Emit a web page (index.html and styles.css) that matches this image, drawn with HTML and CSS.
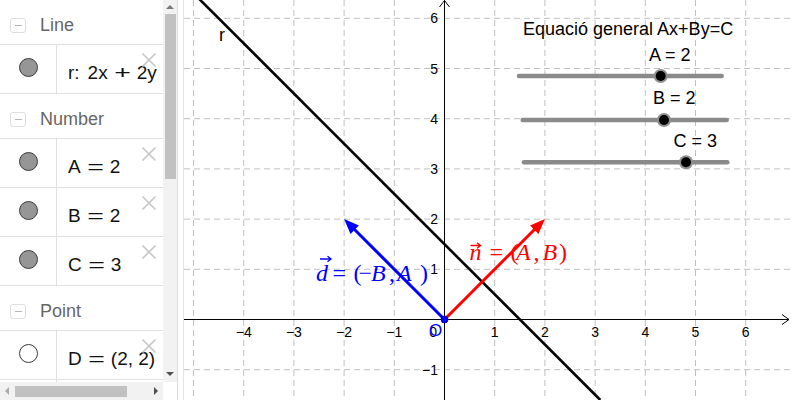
FILE: index.html
```html
<!DOCTYPE html>
<html>
<head>
<meta charset="utf-8">
<link rel="stylesheet" href="styles.css">
</head>
<body>
<div class="app">
  <div class="algebra">
    <div class="av-list">
      <div class="group"><span class="toggle"></span><span class="gname">Line</span></div>
      <div class="item">
        <div class="marble"><span class="dot"></span></div>
        <div class="expr"><span class="lbl">r:</span>2x<span class="op">+</span>2y<span class="op">=</span>3</div>
        <svg class="del" viewBox="0 0 16 16"><path d="M1.5 1.5L14.5 14.5M14.5 1.5L1.5 14.5"/></svg>
      </div>
      <div class="group"><span class="toggle"></span><span class="gname">Number</span></div>
      <div class="item">
        <div class="marble"><span class="dot"></span></div>
        <div class="expr">A<span class="op">=</span>2</div>
        <svg class="del" viewBox="0 0 16 16"><path d="M1.5 1.5L14.5 14.5M14.5 1.5L1.5 14.5"/></svg>
      </div>
      <div class="item">
        <div class="marble"><span class="dot"></span></div>
        <div class="expr">B<span class="op">=</span>2</div>
        <svg class="del" viewBox="0 0 16 16"><path d="M1.5 1.5L14.5 14.5M14.5 1.5L1.5 14.5"/></svg>
      </div>
      <div class="item">
        <div class="marble"><span class="dot"></span></div>
        <div class="expr">C<span class="op">=</span>3</div>
        <svg class="del" viewBox="0 0 16 16"><path d="M1.5 1.5L14.5 14.5M14.5 1.5L1.5 14.5"/></svg>
      </div>
      <div class="group"><span class="toggle"></span><span class="gname">Point</span></div>
      <div class="item">
        <div class="marble"><span class="dot hollow"></span></div>
        <div class="expr">D<span class="op">=</span>(2, 2)</div>
        <svg class="del" viewBox="0 0 16 16"><path d="M1.5 1.5L14.5 14.5M14.5 1.5L1.5 14.5"/></svg>
      </div>
      <div class="item">
        <div class="marble"></div>
      </div>
    </div>
    <div class="vscroll">
      <div class="btn top"><span class="tri up"></span></div>
      <div class="vthumb"></div>
      <div class="spacer"></div>
      <div class="btn bottom"><span class="tri down"></span></div>
    </div>
    <div class="hscroll">
      <div class="hbtn left"><span class="tri lt"></span></div>
      <div class="hthumb"></div>
      <div class="spacer"></div>
      <div class="hbtn right"><span class="tri rt"></span></div>
    </div>
    <div class="corner"></div>
  </div>
  <div class="splitter"></div>
  <div class="graphics">
    <svg width="606" height="400" viewBox="184 0 606 400" xmlns="http://www.w3.org/2000/svg">
      <g class="grid">
        <line x1="193.5" y1="0" x2="193.5" y2="400"/>
        <line x1="243.7" y1="0" x2="243.7" y2="400"/>
        <line x1="293.9" y1="0" x2="293.9" y2="400"/>
        <line x1="344.1" y1="0" x2="344.1" y2="400"/>
        <line x1="394.3" y1="0" x2="394.3" y2="400"/>
        <line x1="494.7" y1="0" x2="494.7" y2="400"/>
        <line x1="544.9" y1="0" x2="544.9" y2="400"/>
        <line x1="595.1" y1="0" x2="595.1" y2="400"/>
        <line x1="645.3" y1="0" x2="645.3" y2="400"/>
        <line x1="695.5" y1="0" x2="695.5" y2="400"/>
        <line x1="745.7" y1="0" x2="745.7" y2="400"/>
        <line x1="184" y1="18.3" x2="790" y2="18.3"/>
        <line x1="184" y1="68.5" x2="790" y2="68.5"/>
        <line x1="184" y1="118.7" x2="790" y2="118.7"/>
        <line x1="184" y1="168.9" x2="790" y2="168.9"/>
        <line x1="184" y1="219.1" x2="790" y2="219.1"/>
        <line x1="184" y1="269.3" x2="790" y2="269.3"/>
        <line x1="184" y1="369.7" x2="790" y2="369.7"/>
      </g>
      <g class="axes">
        <line x1="184" y1="319.5" x2="789" y2="319.5"/>
        <line x1="444.5" y1="0" x2="444.5" y2="400"/>
        <path d="M782 314.5L789 319.5L782 324.5"/>
        <path d="M439.5 7L444.5 0.5L449.5 7"/>
      </g>
      <g class="ticks">
        <text x="243.7" y="337">−4</text>
        <text x="293.9" y="337">−3</text>
        <text x="344.1" y="337">−2</text>
        <text x="394.3" y="337">−1</text>
        <text x="494.7" y="337">1</text>
        <text x="544.9" y="337">2</text>
        <text x="595.1" y="337">3</text>
        <text x="645.3" y="337">4</text>
        <text x="695.5" y="337">5</text>
        <text x="745.7" y="337">6</text>
      </g>
      <g class="yticks">
        <text x="438" y="23.3">6</text>
        <text x="438" y="73.5">5</text>
        <text x="438" y="123.7">4</text>
        <text x="438" y="173.9">3</text>
        <text x="438" y="224.1">2</text>
        <text x="438" y="274.3">1</text>
        <text x="438" y="374.7">−1</text>
        <text x="437" y="337">0</text>
      </g>
      <line class="liner" x1="184" y1="-16.3" x2="600.3" y2="400"/>
      <text class="rlabel" x="219" y="41">r</text>
      <line class="vecb" x1="444.5" y1="319.5" x2="353" y2="228"/>
      <polygon class="headb" points="344.1,219.1 358.9,225.5 350.5,233.9"/>
      <line class="vecr" x1="444.5" y1="319.5" x2="536" y2="228"/>
      <polygon class="headr" points="544.9,219.1 538.5,233.9 530.1,225.5"/>
      <circle class="ptO" cx="444.5" cy="319.5" r="3.5"/>
      <text class="olabel" x="429" y="335.5">O</text>
      <g class="mathr">
        <text y="259.5"><tspan x="469.5" class="it">n</tspan><tspan x="489.5">=</tspan><tspan x="510.5">(</tspan><tspan x="516" class="it">A</tspan><tspan x="533.5">,</tspan><tspan x="542.5" class="it">B</tspan><tspan x="559">)</tspan></text>
        <path class="acc" d="M470.5 245.5H480M477 242.8L480.5 245.5L477 248.2"/>
      </g>
      <g class="mathb">
        <text y="280.5"><tspan x="316" class="it">d</tspan><tspan x="332.5">=</tspan><tspan x="353.5">(</tspan><tspan x="358.5">−</tspan><tspan x="371" class="it">B</tspan><tspan x="389">,</tspan><tspan x="397" class="it">A</tspan><tspan x="420">)</tspan></text>
        <path class="acc" d="M320 259H330.5M327.5 256.3L331 259L327.5 261.7"/>
      </g>
      <g class="sliders">
        <text class="title" x="523" y="35">Equació general Ax+By=C</text>
        <text class="slab" x="649" y="60.7">A = 2</text>
        <line class="track" x1="519" y1="76" x2="721.7" y2="76"/>
        <circle class="ring" cx="660.7" cy="76" r="7"/>
        <circle class="knob" cx="660.7" cy="76" r="5"/>
        <text class="slab" x="653" y="104.3">B = 2</text>
        <line class="track" x1="522.7" y1="120" x2="726.7" y2="120"/>
        <circle class="ring" cx="664" cy="120" r="7"/>
        <circle class="knob" cx="664" cy="120" r="5"/>
        <text class="slab" x="673.5" y="146.7">C = 3</text>
        <line class="track" x1="524" y1="162.3" x2="727.3" y2="162.3"/>
        <circle class="ring" cx="686" cy="162.3" r="7"/>
        <circle class="knob" cx="686" cy="162.3" r="5"/>
      </g>
    </svg>
  </div>
  <div class="edge"></div>
</div>
</body>
</html>
```
FILE: styles.css
```css
html, body {
  margin: 0;
  padding: 0;
  background: #fff;
}
body {
  width: 800px;
  height: 400px;
  overflow: hidden;
  font-family: "Liberation Sans", Arial, sans-serif;
}
.app {
  display: flex;
  width: 800px;
  height: 400px;
}

/* Algebra view */
.algebra {
  flex: none;
  width: 177px;
  height: 400px;
  border-right: 1px solid #dcdcdc;
  display: grid;
  grid-template-columns: 163px 14px;
  grid-template-rows: 382px 18px;
}
.av-list {
  overflow: hidden;
  background: #fff;
}
.group {
  box-sizing: border-box;
  height: 45px;
  border-bottom: 1px solid #e0e0e0;
  display: flex;
  align-items: flex-start;
  padding: 18px 0 0 10px;
}
.toggle {
  flex: none;
  box-sizing: border-box;
  width: 16px;
  height: 15px;
  border: 1px solid #dedede;
  border-radius: 3px;
  display: flex;
  align-items: center;
  justify-content: center;
}
.toggle::before {
  content: "";
  width: 7px;
  height: 1px;
  background: #b4b4b4;
}
.gname {
  margin-left: 14px;
  margin-top: -3px;
  font-size: 18px;
  line-height: 20px;
  color: #666;
}
.item {
  box-sizing: border-box;
  height: 49px;
  border-bottom: 1px solid #e0e0e0;
  display: flex;
  position: relative;
}
.marble {
  flex: none;
  box-sizing: border-box;
  width: 57px;
  border-right: 1px solid #e0e0e0;
  display: flex;
  justify-content: center;
  align-items: flex-start;
  padding-top: 13px;
}
.dot {
  box-sizing: border-box;
  width: 19px;
  height: 19px;
  border-radius: 50%;
  background: #969696;
  border: 1px solid #3a3a3a;
}
.dot.hollow {
  background: #fff;
}
.expr {
  padding: 18px 0 0 11px;
  font-size: 19px;
  line-height: 20px;
  white-space: nowrap;
  color: #111;
}
.lbl {
  margin-right: 8px;
}
.op {
  display: inline-block;
  margin: 0 9px;
  transform: scaleX(1.5);
}
.del {
  position: absolute;
  left: 141px;
  top: 7px;
  width: 16px;
  height: 16px;
  fill: none;
  stroke: #c6c6c6;
  stroke-width: 1.6;
}

/* Scrollbars */
.vscroll {
  background: #f2f2f2;
  display: flex;
  flex-direction: column;
}
.btn {
  display: flex;
  align-items: center;
  justify-content: center;
}
.btn.top {
  height: 14px;
}
.btn.bottom {
  height: 16px;
}
.vthumb {
  width: 11px;
  height: 165px;
  margin-left: 2px;
  background: #c1c1c1;
}
.spacer {
  flex: 1;
}
.tri {
  width: 0;
  height: 0;
  display: block;
}
.tri.up {
  border-left: 4px solid transparent;
  border-right: 4px solid transparent;
  border-bottom: 4px solid #7a7a7a;
}
.tri.down {
  border-left: 4px solid transparent;
  border-right: 4px solid transparent;
  border-top: 4px solid #505050;
}
.hscroll {
  background: #f2f2f2;
  display: flex;
  align-items: center;
}
.hbtn {
  display: flex;
  align-items: center;
  justify-content: center;
  height: 18px;
}
.hbtn.left {
  width: 13px;
}
.hbtn.right {
  width: 14px;
}
.hthumb {
  width: 112px;
  height: 11px;
  margin-left: 2px;
  background: #c1c1c1;
}
.tri.lt {
  border-top: 4px solid transparent;
  border-bottom: 4px solid transparent;
  border-right: 4px solid #acacac;
}
.tri.rt {
  border-top: 4px solid transparent;
  border-bottom: 4px solid transparent;
  border-left: 4px solid #505050;
}
.corner {
  background: #fff;
}

.splitter {
  flex: none;
  width: 5px;
}

/* Graphics view */
.graphics {
  flex: none;
  width: 606px;
  height: 400px;
  border-left: 1px solid #e2e2e2;
  background: #fff;
}
.graphics svg {
  display: block;
}
.grid line {
  stroke: #c0c0c0;
  stroke-width: 1;
  stroke-dasharray: 6 4;
}
.axes line, .axes path {
  stroke: #000;
  stroke-width: 1;
  fill: none;
}
.ticks text {
  font-family: "Liberation Sans", Arial, sans-serif;
  font-size: 14px;
  text-anchor: middle;
  fill: #000;
}
.yticks text {
  font-family: "Liberation Sans", Arial, sans-serif;
  font-size: 14px;
  text-anchor: end;
  fill: #000;
}
.liner {
  stroke: #000;
  stroke-width: 2.6;
}
.rlabel {
  font-family: "Liberation Sans", Arial, sans-serif;
  font-size: 18px;
  fill: #000;
}
.vecb {
  stroke: #0000ff;
  stroke-width: 3;
}
.headb {
  fill: #0000ff;
}
.vecr {
  stroke: #ff0000;
  stroke-width: 3;
}
.headr {
  fill: #ff0000;
}
.ptO {
  fill: #0000ff;
  stroke: #00007a;
  stroke-width: 0.8;
}
.olabel {
  font-family: "Liberation Sans", Arial, sans-serif;
  font-size: 17px;
  fill: #0000ff;
}
.mathr text, .mathb text {
  font-family: "Liberation Serif", "Times New Roman", serif;
  font-size: 24px;
}
.mathr text {
  fill: #ff0000;
}
.mathb text {
  fill: #0000ff;
}
.it {
  font-style: italic;
}
.acc {
  fill: none;
  stroke-width: 1.3;
}
.mathr .acc {
  stroke: #ff0000;
}
.mathb .acc {
  stroke: #0000ff;
}
.sliders text {
  font-family: "Liberation Sans", Arial, sans-serif;
  font-size: 18px;
  fill: #000;
}
.track {
  stroke: #8a8a8a;
  stroke-width: 4.5;
  stroke-linecap: round;
}
.ring {
  fill: #8f8f8f;
}
.knob {
  fill: #000;
}
```
